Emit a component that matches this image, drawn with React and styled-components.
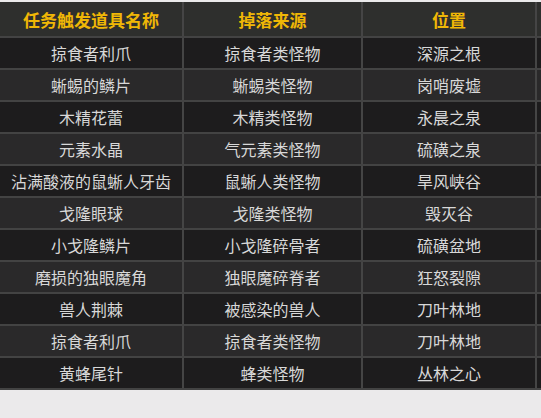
import React from "react";
import styled, { createGlobalStyle } from "styled-components";

const rows = [
  ["掠食者利爪", "掠食者类怪物", "深源之根"],
  ["蜥蜴的鳞片", "蜥蜴类怪物", "岗哨废墟"],
  ["木精花蕾", "木精类怪物", "永晨之泉"],
  ["元素水晶", "气元素类怪物", "硫磺之泉"],
  ["沾满酸液的鼠蜥人牙齿", "鼠蜥人类怪物", "旱风峡谷"],
  ["戈隆眼球", "戈隆类怪物", "毁灭谷"],
  ["小戈隆鳞片", "小戈隆碎骨者", "硫磺盆地"],
  ["磨损的独眼魔角", "独眼魔碎脊者", "狂怒裂隙"],
  ["兽人荆棘", "被感染的兽人", "刀叶林地"],
  ["掠食者利爪", "掠食者类怪物", "刀叶林地"],
  ["黄蜂尾针", "蜂类怪物", "丛林之心"],
];

const headers = ["任务触发道具名称", "掉落来源", "位置"];

export default function App() {
  return (
    <>
      <GlobalStyle />
      <Page>
        <Table>
          <Row $kind="head">
            {headers.map((h, i) => (
              <Cell key={i} $head>
                {h}
              </Cell>
            ))}
          </Row>
          {rows.map((r, idx) => (
            <Row key={idx} $kind={idx % 2 === 0 ? "dark" : "light"}>
              {r.map((c, i) => (
                <Cell key={i}>{c}</Cell>
              ))}
            </Row>
          ))}
        </Table>
      </Page>
    </>
  );
}

const GlobalStyle = createGlobalStyle`
  html, body {
    margin: 0;
    padding: 0;
    background: #ebeaeb;
  }
`;

const Page = styled.div`
  width: 541px;
  height: 418px;
  padding-top: 2px;
  box-sizing: border-box;
  background: #ebeaeb;
  font-family: "Noto Sans CJK SC", "Noto Sans", sans-serif;
`;

const Table = styled.div`
  display: flex;
  flex-direction: column;
  border-bottom: 2px solid #434343;
`;

const rowColors = {
  head: "#2e2f2d",
  dark: "#1d1c1d",
  light: "#2a292a",
};

const Row = styled.div`
  display: grid;
  grid-template-columns: 184px 179px 174px 1fr;
  height: ${(p) => (p.$kind === "head" ? "34px" : "30px")};
  background: ${(p) => rowColors[p.$kind]};
  border-top: ${(p) => (p.$kind === "head" ? "none" : "2px solid #434343")};
`;

const Cell = styled.div`
  display: flex;
  align-items: center;
  justify-content: center;
  border-right: 2px solid #454545;
  color: ${(p) => (p.$head ? "#f0b706" : "#d8d8d8")};
  font-size: ${(p) => (p.$head ? "17px" : "16px")};
  font-weight: ${(p) => (p.$head ? 700 : 400)};
  white-space: nowrap;
  line-height: 1;
`;
